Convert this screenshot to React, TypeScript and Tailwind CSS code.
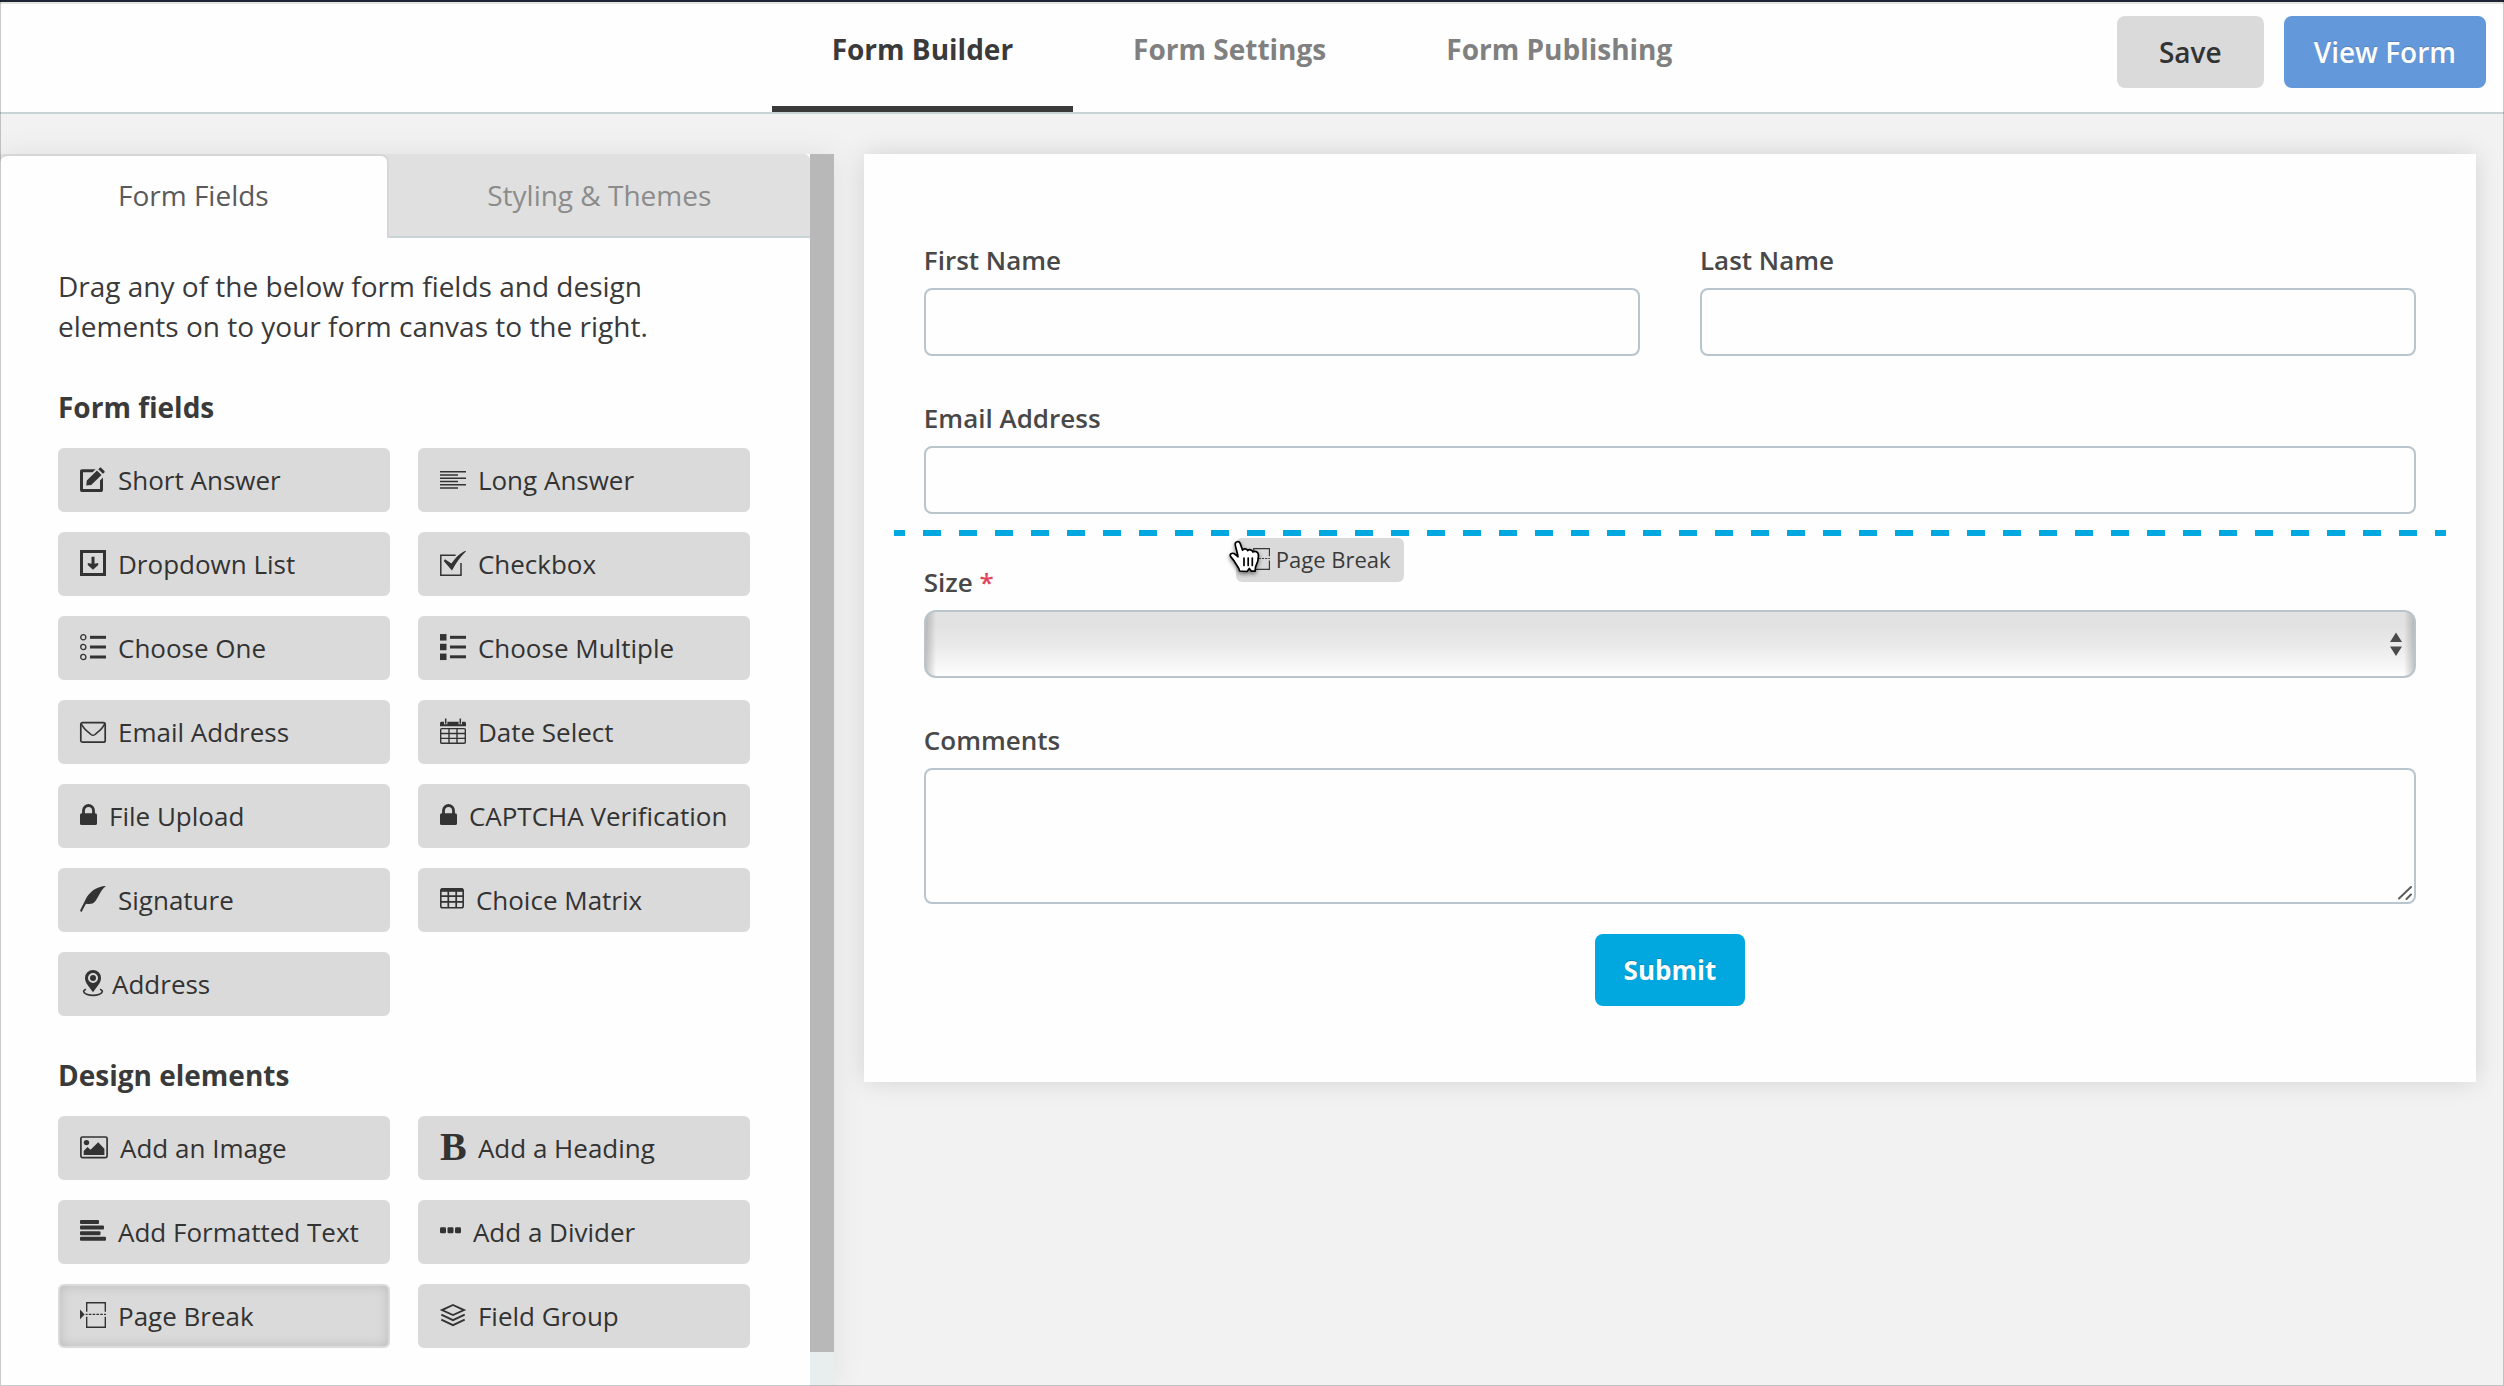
import React from "react";

type IconProps = { className?: string };

const box = "h-[26px] w-[26px] shrink-0 overflow-visible";

function Glyph({
  className = box,
  width = 26,
  children,
}: IconProps & { width?: number; children: React.ReactNode }) {
  return (
    <svg
      className={className}
      viewBox={`0 0 ${width} 26`}
      fill="none"
      stroke="none"
      aria-hidden="true"
    >
      {children}
    </svg>
  );
}

const EditIcon = () => (
  <Glyph>
    <path d="M15.600 3.300H2.200C.9 3.300 0 4.200 0 5.500v18.200C0 25.100.9 26 2.200 26h18.600c1.300 0 2.200-.9 2.200-2.300V11.500l-3 3V23H3V6.300h9.600z" fill="currentColor" />
    <path d="M6.200 19.500l.6-5L17 4.400l4.500 4.500-10.300 10.200zM18.300 3.200l1.500-1.400c.4-.4.900-.4 1.300 0l3.300 3.300c.4.4.4.900 0 1.300l-1.500 1.300z" fill="currentColor" />
  </Glyph>
);

const DropdownIcon = () => (
  <Glyph>
    <rect x="1.500" y="1.500" width="23" height="23" stroke="currentColor" strokeWidth="3" />
    <path d="M11.500 6.700h3v7l3.700-.7v2L13 19.700 7.800 15v-2l3.700.7z" fill="currentColor" />
  </Glyph>
);

const RadioListIcon = () => (
  <Glyph>
    {[3.3, 13, 23].map((y) => (
      <g key={y} stroke="currentColor">
        <circle cx="3.300" cy={y} r="2.600" strokeWidth="1.300" />
        <path d={`M10 ${y}H26`} strokeWidth="3" />
      </g>
    ))}
  </Glyph>
);

const BulletListIcon = () => (
  <Glyph>
    {[3.3, 13, 22.8].map((y) => (
      <g key={y} stroke="currentColor">
        <path d={`M0 ${y}H6.500`} strokeWidth="6.500" />
        <path d={`M10 ${y}H26`} strokeWidth="3" />
      </g>
    ))}
  </Glyph>
);

const LinesIcon = () => (
  <Glyph>
    <path
      d="M0 5.800h26M0 9h18M0 12.300h26M0 15.500h18M0 18.800h26M0 22h18"
      stroke="currentColor"
      strokeWidth="1.600"
    />
  </Glyph>
);

const CheckboxIcon = () => (
  <Glyph>
    <path d="M15.600 5.200H.8v20h20.200V13" stroke="currentColor" strokeWidth="1.500" />
    <path d="M5 9.300l6.400 4.200C15.500 8 20 3 25.500.8l.5.500C20.500 6.500 16 13 12 20.500L3.700 11z" fill="currentColor" />
  </Glyph>
);

const MailIcon = () => (
  <Glyph>
    <rect x=".8" y="4.600" width="24.400" height="19.600" rx="1.800" stroke="currentColor" strokeWidth="1.700" />
    <path d="M1.200 5.600C3.500 11 7.500 13.500 11 16.500q2 1.600 4 0C18.500 13.500 22.500 11 24.800 5.600" stroke="currentColor" strokeWidth="1.500" />
  </Glyph>
);

const CalendarIcon = () => (
  <Glyph>
    <path d="M0 8.300V5.200C0 4.200.7 3.700 1.600 3.700h22.800c.9 0 1.600.5 1.600 1.500v3.100z" fill="currentColor" />
    <path d="M5.700.5v5.700M20.300.5v5.700" stroke="#dadada" strokeWidth="3.400" />
    <path d="M5.700.5v5.300M20.300.5v5.300" stroke="currentColor" strokeWidth="1.500" />
    <rect x=".7" y="10.600" width="24.600" height="14.700" rx="1" stroke="currentColor" strokeWidth="1.400" />
    <path d="M9 10.600v14.700M17 10.600v14.700M.7 15.500h24.600M.7 20.400h24.600" stroke="currentColor" strokeWidth="1.400" />
  </Glyph>
);

const LockIcon = () => (
  <Glyph width={17} className="h-[26px] w-[17px] shrink-0">
    <rect y="11.300" width="17" height="11.700" rx="1.600" fill="currentColor" />
    <path d="M3.500 12V8.500a5 5 0 0 1 10 0V12" stroke="currentColor" strokeWidth="2.800" />
  </Glyph>
);

const FeatherIcon = () => (
  <Glyph>
    <path d="M26 0C16.500.3 9 6 5.300 14 3.300 18 1.500 21.500 0 25l1.600 1C3 23.200 4.200 20.500 6 17.700c2 .3 4.500.3 6.500-.1C18 14.500 18.500 6 26 0z" fill="currentColor" />
  </Glyph>
);

const TableIcon = () => (
  <Glyph width={24} className="h-[26px] w-6 shrink-0">
    <rect x=".8" y="2.800" width="22.400" height="18.900" rx="1.800" stroke="currentColor" strokeWidth="1.600" />
    <path d="M1 4.200h22" stroke="currentColor" strokeWidth="3.200" />
    <path d="M8.300 5v16.700M16.200 5v16.700M1 10.200h22M1 15.900h22" stroke="currentColor" strokeWidth="1.700" />
  </Glyph>
);

const PinIcon = () => (
  <Glyph>
    <path
      fillRule="evenodd"
      d="M13 0a8 8 0 0 0-8 8c0 5 4 8.500 8 14.300C17 16.500 21 13 21 8a8 8 0 0 0-8-8zm0 3a5 5 0 1 1 0 10 5 5 0 0 1 0-10z"
      fill="currentColor"
    />
    <circle cx="13" cy="8" r="3" fill="currentColor" />
    <path d="M6 19.200c-3.500 1.300-2.800 3.800.5 5 4 1.400 9 1.400 13 0 3.300-1.200 4-3.700.5-5" stroke="currentColor" strokeWidth="1.600" />
  </Glyph>
);

const ImageIcon = () => (
  <Glyph width={28} className="h-[26px] w-7 shrink-0">
    <rect x=".9" y="3" width="26.200" height="20.600" rx="1.500" stroke="currentColor" strokeWidth="1.700" />
    <circle cx="6.500" cy="8.600" r="2.700" fill="currentColor" />
    <path d="M3.700 21v-4l3.800-4 3 2.800L18.200 8.300l6.200 6.500V21z" fill="currentColor" />
  </Glyph>
);

const FormattedTextIcon = () => (
  <Glyph>
    <g fill="currentColor">
      <rect y="2" width="19" height="4" rx="1" />
      <rect y="7.600" width="24" height="4" rx="1" />
      <rect y="13.200" width="20.500" height="4" rx="1" />
      <rect y="18.800" width="26" height="4" rx="1" />
    </g>
  </Glyph>
);

const PageBreakIcon = ({ className }: IconProps) => (
  <Glyph className={className}>
    <path d="M6.700 9.700V.7h18.600v9M6.700 14.700v10.600h18.600V14.700" stroke="currentColor" strokeWidth="1.400" />
    <path d="M5.700 12.400h1.900m1.200 0h2.600m1.200 0h2.600m1.200 0h2.600m1.200 0h2.600m1.200 0h2" stroke="currentColor" strokeWidth="1.300" />
    <path d="M0 7.600l4.600 4.800L0 17.200z" fill="currentColor" />
  </Glyph>
);

const HeadingIcon = () => (
  <span
    aria-hidden="true"
    className="w-[26px] shrink-0 text-center font-['Liberation_Serif',serif] text-[40px] leading-[26px] font-bold"
  >
    B
  </span>
);

const DotsIcon = () => (
  <Glyph width={21} className="h-[26px] w-[21px] shrink-0">
    <g fill="currentColor">
      <rect y="9.300" width="6" height="6" rx="1.300" />
      <rect x="7.500" y="9.300" width="6" height="6" rx="1.300" />
      <rect x="15" y="9.300" width="6" height="6" rx="1.300" />
    </g>
  </Glyph>
);

const LayersIcon = () => (
  <Glyph>
    <g stroke="currentColor" strokeWidth="1.900">
      <path d="M13 3L24 8.100 13 13 2 8.100z" />
      <path d="M1.300 12.700L13 18.200l11.700-5.500M1.300 17.600L13 23.200l11.700-5.600" />
    </g>
  </Glyph>
);

const HandCursor = () => (
  <svg
    className="absolute top-[2px] -left-[7px] h-[34px] w-[32px] overflow-visible drop-shadow-[0_2px_2px_rgba(0,0,0,0.5)]"
    viewBox="0 0 32 34"
    aria-hidden="true"
  >
    <path
      d="M10.600 31C10.300 27.500 7.500 25.500 6 22.500 4.700 19.700 2.500 18 1.400 16.200c-.8-2 1.400-3.600 3.600-2.600 1.500.8 2.600 2.200 4 3.200C8.600 12.800 6.500 7.500 6.200 4.500 6 1.300 10.200.6 11.200 3.500l2.400 6.700c1-2 4.300-1.800 5 .4 1.500-1.600 4.700-1 5.200 1.400 1.900-1.200 5.100-.6 5.500 2.200.5 5-.6 8.300-2.200 11.300-1 2-1 3.600-.9 5.700h-3.800L20.300 28.500l-2.300 3z"
      fill="#fff"
      stroke="#000"
      strokeWidth="1.700"
      strokeLinejoin="round"
    />
    <path d="M15 18v7.500M19.200 18v7.500M23.300 18v7.500" stroke="#000" strokeWidth="1.700" strokeLinecap="round" />
  </svg>
);

type Tool = { label: string; icon: React.ReactNode; tight?: boolean; pressed?: boolean };

const formFields: Tool[] = [
  { label: "Short Answer", icon: <EditIcon /> },
  { label: "Long Answer", icon: <LinesIcon /> },
  { label: "Dropdown List", icon: <DropdownIcon /> },
  { label: "Checkbox", icon: <CheckboxIcon /> },
  { label: "Choose One", icon: <RadioListIcon /> },
  { label: "Choose Multiple", icon: <BulletListIcon /> },
  { label: "Email Address", icon: <MailIcon /> },
  { label: "Date Select", icon: <CalendarIcon /> },
  { label: "File Upload", icon: <LockIcon /> },
  { label: "CAPTCHA Verification", icon: <LockIcon /> },
  { label: "Signature", icon: <FeatherIcon /> },
  { label: "Choice Matrix", icon: <TableIcon /> },
  { label: "Address", icon: <PinIcon />, tight: true },
];

const designElements: Tool[] = [
  { label: "Add an Image", icon: <ImageIcon /> },
  { label: "Add a Heading", icon: <HeadingIcon /> },
  { label: "Add Formatted Text", icon: <FormattedTextIcon /> },
  { label: "Add a Divider", icon: <DotsIcon /> },
  { label: "Page Break", icon: <PageBreakIcon />, pressed: true },
  { label: "Field Group", icon: <LayersIcon /> },
];

function ToolButton({ tool }: { tool: Tool }) {
  return (
    <button
      type="button"
      className={
        "flex h-16 items-center rounded-md border-2 border-[#dadada] bg-[#dadada] pl-5 text-left text-[26px] leading-9 whitespace-nowrap text-[#333] " +
        (tool.tight ? "gap-1.5 " : "gap-3 ") +
        (tool.pressed ? "shadow-[inset_0_0_12px_rgba(0,0,0,0.14)]" : "")
      }
    >
      <span className="mb-0.5 flex">{tool.icon}</span>
      {tool.label}
    </button>
  );
}

function ToolSection({ title, tools }: { title: string; tools: Tool[] }) {
  return (
    <section className="mt-[39px]">
      <h2 className="mb-[21px] text-[28px] leading-10 font-bold text-[#3a3a3a]">{title}</h2>
      <div className="grid grid-cols-2 gap-x-7 gap-y-5">
        {tools.map((t) => (
          <ToolButton key={t.label} tool={t} />
        ))}
      </div>
    </section>
  );
}

function Field({
  id,
  label,
  required,
  children,
}: {
  id: string;
  label: string;
  required?: boolean;
  children: React.ReactNode;
}) {
  return (
    <div className="flex min-w-0 flex-1 flex-col gap-2.5">
      <label htmlFor={id} className="text-[26px] leading-9 font-semibold text-[#484848]">
        {label}
        {required && <span className="text-[#e2445c]"> *</span>}
      </label>
      {children}
    </div>
  );
}

const inputClass =
  "h-[68px] w-full rounded-lg border-2 border-[#b9c5cc] bg-[#fefefe] px-4 text-[26px] outline-none";

const navItems = ["Form Builder", "Form Settings", "Form Publishing"];

export default function App() {
  return (
    <div className="relative flex min-h-screen flex-col bg-[#f2f2f2] font-['Open_Sans',sans-serif] text-[#3a3a3a]">
      <header className="grid grid-cols-[1fr_auto_1fr] border-t-2 border-b-2 border-t-[#1d2433] border-b-[#c7d3d5] bg-[#fefefe] shadow-[inset_0_2px_0_#e4e5e0]">
        <div />
        <nav className="flex h-[110px]">
          {navItems.map((item, i) => (
            <a
              key={item}
              href="#"
              className={
                "flex items-start border-b-[6px] px-[60px] pt-7 text-[28px] leading-[38px] font-bold " +
                (i === 0 ? "border-[#3a3a3a] text-[#3a3a3a]" : "border-transparent text-[#808080]")
              }
            >
              {item}
            </a>
          ))}
        </nav>
        <div className="flex items-start justify-end gap-5 pt-3.5 pr-[18px]">
          <button
            type="button"
            className="h-[72px] rounded-lg bg-[#dadada] px-[42px] text-[28px] leading-10 font-semibold text-[#333]"
          >
            Save
          </button>
          <button
            type="button"
            className="h-[72px] rounded-lg bg-[#6399db] px-[30px] text-[28px] leading-10 font-semibold text-white [text-shadow:0_-1px_1px_rgba(0,0,0,0.15)]"
          >
            View Form
          </button>
        </div>
      </header>

      <main className="flex flex-1 pt-10">
        <aside className="flex w-[33.3%] shadow-[0_0_30px_rgba(0,0,0,0.08)]">
          <div className="flex-1 bg-[#fefefe]">
            <div role="tablist" className="flex h-[84px] rounded-tr-md bg-[#e0e0e0] text-[28px] leading-10">
              <button
                type="button"
                role="tab"
                aria-selected="true"
                className="w-[48%] rounded-t-lg border-t-2 border-r-2 border-[#d5d7d7] bg-[#fefefe] pb-1 text-[#5a5a5a]"
              >
                Form Fields
              </button>
              <button
                type="button"
                role="tab"
                aria-selected="false"
                className="flex-1 border-b-2 border-[#c7d3d5] text-[#8c8c8c]"
              >
                Styling &amp; Themes
              </button>
            </div>
            <div className="pt-7 pr-[60px] pb-[38px] pl-[58px]">
              <p className="mb-[41px] text-[28px] leading-10">
                Drag any of the below form fields and design elements on to your form canvas to the right.
              </p>
              <ToolSection title="Form fields" tools={formFields} />
              <ToolSection title="Design elements" tools={designElements} />
            </div>
          </div>
          <div className="flex w-6 flex-col bg-[#e8eded]" aria-hidden="true">
            <div className="mb-[34px] flex-1 bg-[#b8b8b8]" />
          </div>
        </aside>

        <section className="flex-1 pr-7 pl-[30px]">
          <form className="relative bg-[#fefefe] px-[60px] pt-[88px] pb-[76px] shadow-[0_0_24px_rgba(0,0,0,0.13)]">
            <div className="flex gap-[60px]">
              <Field id="first" label="First Name">
                <input id="first" type="text" className={inputClass} />
              </Field>
              <Field id="last" label="Last Name">
                <input id="last" type="text" className={inputClass} />
              </Field>
            </div>
            <div className="mt-11">
              <Field id="email" label="Email Address">
                <input id="email" type="email" className={inputClass} />
              </Field>
            </div>
            <div className="-mx-[30px] mt-4 mb-7 h-1.5 bg-[repeating-linear-gradient(to_right,#00a8df_0_18px,transparent_18px_36px)] bg-[position:-7px_0] bg-[size:36px_6px]" />
            <Field id="size" label="Size" required>
              <div className="relative">
                <select
                  id="size"
                  className="block h-[68px] w-full appearance-none rounded-xl border-2 border-[#b9c5cc] bg-[linear-gradient(to_right,rgba(120,120,120,0.4),transparent_10px,transparent_calc(100%-10px),rgba(120,120,120,0.4)),linear-gradient(to_bottom,#e2e2e2_20%,#e9e9e9_50%,#fdfdfd)] px-4 text-[26px] outline-none"
                >
                  <option value=""></option>
                </select>
                <svg
                  className="pointer-events-none absolute top-[22px] right-3.5 h-6 w-3"
                  viewBox="0 0 12 24"
                  fill="#4a4a4a"
                  aria-hidden="true"
                >
                  <path d="M6 .5L12 10H0zM0 14.500h12L6 24z" />
                </svg>
              </div>
            </Field>
            <div className="mt-11">
              <Field id="comments" label="Comments">
                <div className="relative">
                  <textarea
                    id="comments"
                    className="block h-[136px] w-full resize-none rounded-lg border-2 border-[#b9c5cc] bg-[#fefefe] px-4 py-3 text-[26px] outline-none"
                  />
                  <svg
                    className="pointer-events-none absolute right-1 bottom-1 h-3.5 w-3.5"
                    viewBox="0 0 14 14"
                    stroke="#5c5c5c"
                    strokeWidth="2"
                    strokeLinecap="round"
                    aria-hidden="true"
                  >
                    <path d="M1 12.500L13 1M8.500 13L13 8.500" />
                  </svg>
                </div>
              </Field>
            </div>
            <div className="mt-[30px] flex justify-center">
              <button
                type="submit"
                className="h-[72px] rounded-lg bg-[#00a8df] px-[29px] text-[26px] leading-9 font-bold text-white [text-shadow:0_-1px_1px_rgba(0,0,0,0.2)]"
              >
                Submit
              </button>
            </div>

            <div className="absolute top-[384px] left-[372px] flex h-11 items-center gap-1.5 rounded-md bg-[#dadada] pr-[13px] pb-0.5 pl-3 text-[22px] leading-8 whitespace-nowrap text-[#3a3a3a]">
              <PageBreakIcon className="h-[22px] w-[22px] shrink-0" />
              Page Break
              <HandCursor />
            </div>
          </form>
        </section>
      </main>

      <div className="pointer-events-none absolute inset-0 border-x border-b border-black/20" />
    </div>
  );
}
